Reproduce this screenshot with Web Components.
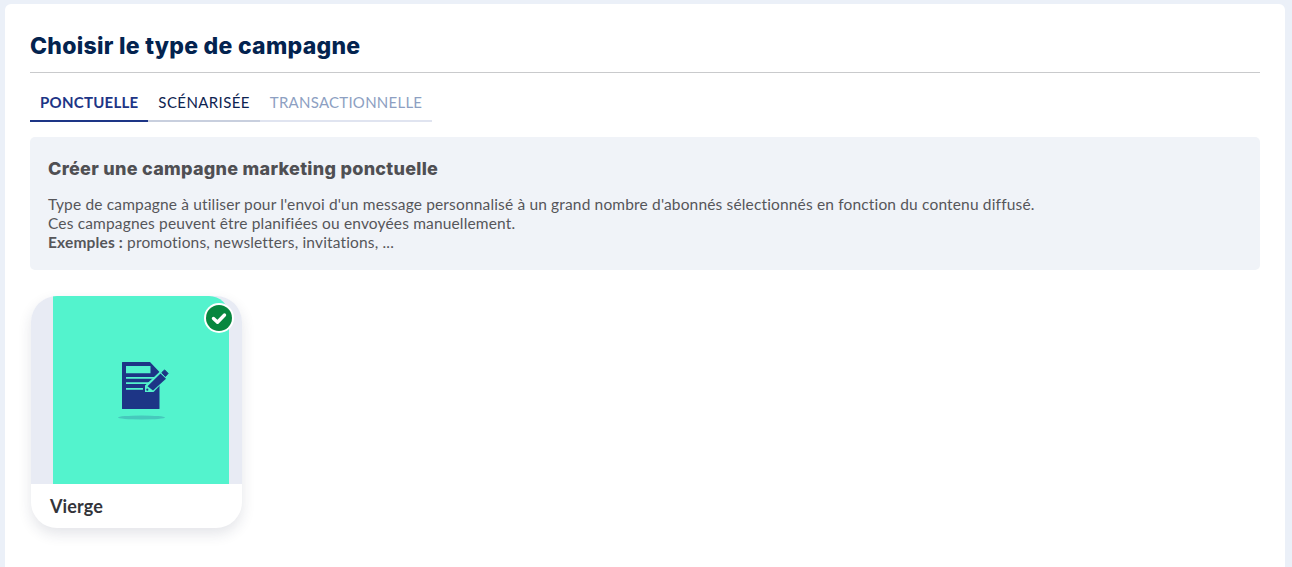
<!DOCTYPE html>
<html lang="fr">
<head>
<meta charset="utf-8">
<title>Choisir le type de campagne</title>
<style>
    html, body { margin: 0; height: 100%; }
    body { background: #ebf0f8; overflow: hidden; font-family: "Lato", "Liberation Sans", sans-serif; }
</style>
</head>
<body>

<template id="campaign-panel-template">
    <style>
        :host { display: block; margin: 4px 7px 0 5px; padding: 25px 25px 0; height: 563px; box-sizing: border-box; background: #fff; border-radius: 6px 6px 0 0; }
        h1 { margin: 0; font: 800 23px/34px "Inter", sans-serif; letter-spacing: 0.27px; color: #03234f; padding-bottom: 9px; border-bottom: 1px solid #c9cacc; }
    </style>
    <h1><slot name="title"></slot></h1>
    <slot></slot>
</template>

<template id="campaign-tabs-template">
    <style>
        :host { display: flex; margin-top: 19px; }
    </style>
    <slot></slot>
</template>

<template id="campaign-tab-template">
    <style>
        :host { display: block; box-sizing: border-box; height: 30px; padding: 0 10px; font: 400 15px/21px "Lato", sans-serif; letter-spacing: 0.4px; color: #0d2350; border-bottom: 2px solid #c8cfde; white-space: nowrap; }
        :host([active]) { font-weight: 700; letter-spacing: 0.25px; color: #1d3586; border-bottom-color: #1d3586; }
        :host([disabled]) { letter-spacing: 0.25px; color: #8d9fc2; border-bottom-color: #e0e4f0; }
    </style>
    <slot></slot>
</template>

<template id="campaign-info-template">
    <style>
        :host { display: block; margin-top: 15px; padding: 20px 18px 18px; height: 133px; box-sizing: border-box; background: #f0f3f8; border-radius: 5px; color: #56565a; font: 400 15.500px/19px "Lato", sans-serif; letter-spacing: 0.155px; }
        h2 { margin: 0 0 14px; font: 800 18px/24px "Inter", sans-serif; letter-spacing: 0.28px; color: #4f4f53; }
    </style>
    <h2><slot name="title"></slot></h2>
    <slot></slot>
</template>

<template id="campaign-card-template">
    <style>
        :host { display: block; position: relative; width: 211px; height: 232px; margin: 26px 0 0 1px; background: #fff; border-radius: 26px; box-shadow: 0 6px 14px rgba(30, 40, 70, .12); }
        .thumb { height: 188px; padding-left: 22px; background: #e8ebf4; border-radius: 26px 26px 0 0; overflow: hidden; }
        .art { width: 176px; height: 100%; display: flex; align-items: center; justify-content: center; background: #53f3cd; border-radius: 0 20px 0 0; }
        .art svg { display: block; margin: 2px 0 0 2px; }
        .label { padding: 11px 19px; font: 700 18px/22px "Lato", sans-serif; letter-spacing: 0.1px; color: #33343a; }
        .check { position: absolute; top: 7px; right: 8px; }
    </style>
    <div class="thumb">
        <div class="art">
            <svg width="56" height="62" viewBox="0 0 56 62">
                <ellipse cx="27.500" cy="57.500" rx="23.500" ry="2" fill="#1d3586" opacity=".22"/>
                <path d="M8.500 2h27.500l9.500 10v36.500a.6.6 0 0 1-.6.6H8.600a.6.6 0 0 1-.6-.6V2.600a.6.6 0 0 1 .5-.6z" fill="#1d3586"/>
                <path d="M12 6h24.500v7.300H12z" fill="#53f3cd"/>
                <path d="M12 17h29v1.700H12zM12 22.300h23v1.700H12zM12 28h17v1.700H12z" fill="#53f3cd"/>
                <path d="M31 32v-6.500L47.500 10l7.500 6-15.500 16z" fill="#53f3cd"/>
                <path d="M33.500 26.300L46.500 13.500l5.500 5.300L39 30.500z" fill="#1d3586"/>
                <path d="M47.800 12.600l2.800-2.700 3.500 3.500-2.700 3.100z" fill="#1d3586" stroke="#1d3586" stroke-linejoin="round"/>
                <circle cx="33.300" cy="29.700" r="1.100" fill="#1d3586"/>
            </svg>
        </div>
    </div>
    <div class="label"><slot></slot></div>
    <svg class="check" width="30" height="30" viewBox="0 0 30 30">
        <circle cx="15" cy="15" r="15" fill="#fff"/>
        <circle cx="15" cy="15" r="13" fill="#07873f"/>
        <path d="M9.500 15.500l4 3.700 7-7.200" fill="none" stroke="#fff" stroke-width="3.400" stroke-linecap="round" stroke-linejoin="round"/>
    </svg>
</template>

<script type="text/javascript">
// each element just clones its template into an open shadow root
function defineFromTemplate(tagName, templateId) {
    const template = document.getElementById(templateId);
    customElements.define(tagName, class extends HTMLElement {
        constructor() {
            super();
            this.attachShadow({mode: 'open'}).appendChild(template.content.cloneNode(true));
        }
    });
}

defineFromTemplate('campaign-panel', 'campaign-panel-template');
defineFromTemplate('campaign-tabs', 'campaign-tabs-template');
defineFromTemplate('campaign-tab', 'campaign-tab-template');
defineFromTemplate('campaign-info', 'campaign-info-template');
defineFromTemplate('campaign-card', 'campaign-card-template');
</script>

<campaign-panel>
    <span slot="title">Choisir le type de campagne</span>
    <campaign-tabs>
        <campaign-tab active>PONCTUELLE</campaign-tab>
        <campaign-tab>SCÉNARISÉE</campaign-tab>
        <campaign-tab disabled>TRANSACTIONNELLE</campaign-tab>
    </campaign-tabs>
    <campaign-info>
        <span slot="title">Créer une campagne marketing ponctuelle</span>
        Type de campagne à utiliser pour l'envoi d'un message personnalisé à un grand nombre d'abonnés sélectionnés en fonction du contenu diffusé.<br>
        Ces campagnes peuvent être planifiées ou envoyées manuellement.<br>
        <b>Exemples :</b> promotions, newsletters, invitations, ...
    </campaign-info>
    <campaign-card>Vierge</campaign-card>
</campaign-panel>

</body>
</html>
